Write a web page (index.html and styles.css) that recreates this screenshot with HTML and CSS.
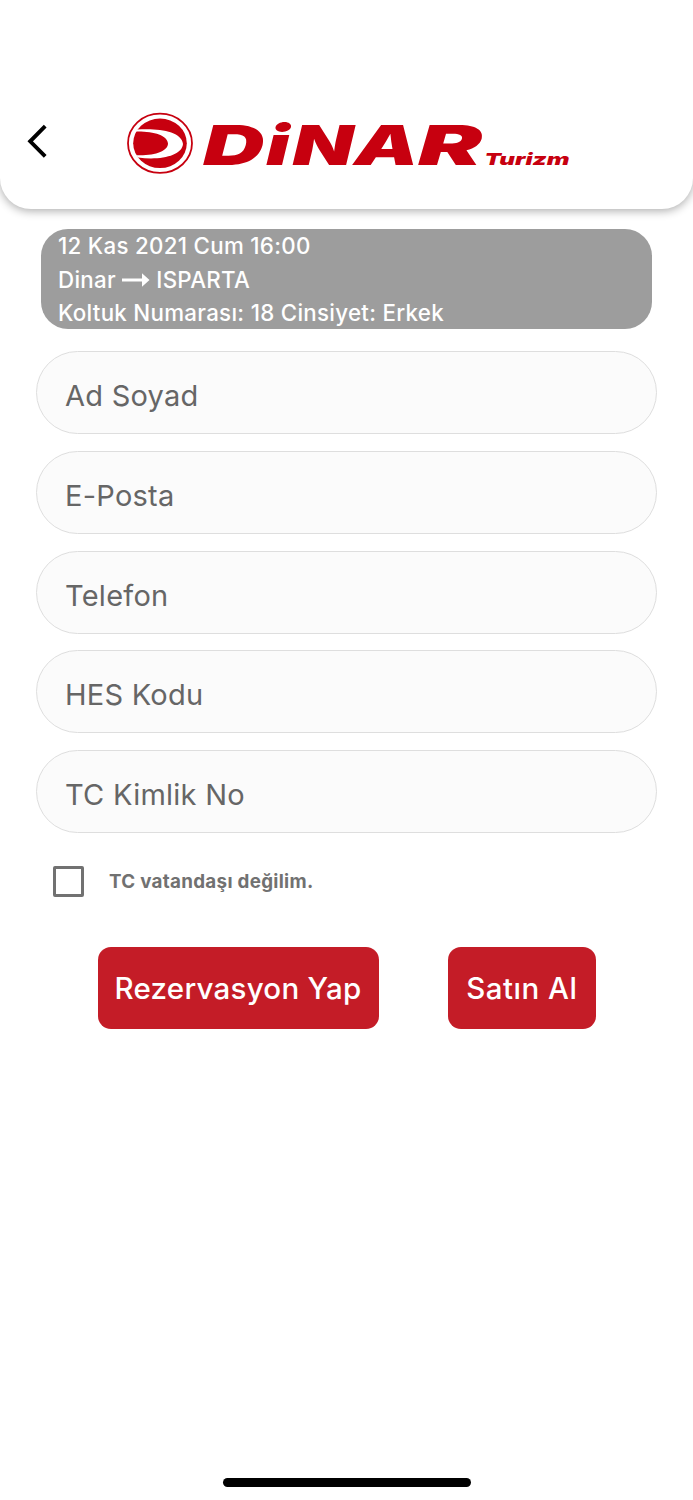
FILE: index.html
```html
<!DOCTYPE html>
<html lang="tr">
<head>
<meta charset="utf-8">
<title>Dinar Turizm</title>
<link rel="stylesheet" href="styles.css">
</head>
<body>
<div class="screen">
  <header class="header">
    <svg class="back" viewBox="0 0 22 34" width="22" height="34"><path d="M20.200 2.200 5.200 17.300l15 15" fill="none" stroke="#000" stroke-width="3.900"/></svg>
    <svg class="logo" viewBox="126 110 446 66" width="446" height="66">
      <ellipse cx="160" cy="143.3" rx="32" ry="29.6" fill="#fff" stroke="#c7000f" stroke-width="1.8"/>
      <ellipse cx="160" cy="143.3" rx="26.8" ry="24.8" fill="#c7000f"/>
      <path d="M137 129.500C158 128 182 131 183 144C182 156 160 160.500 138 157.500L136 155.200C155 156 168 151 168 143.500C167.500 135 153 131 135 131.500Z" fill="#fff"/>
      <g class="wordmark">
        <text transform="translate(203 165) scale(1.540 1)">D</text>
        <text transform="translate(266 165) scale(1.450 1)">i</text>
        <text transform="translate(292.500 165) scale(1.440 1)">N</text>
        <text transform="translate(354 165) scale(1.480 1)">A</text>
        <text transform="translate(418 165) scale(1.740 1)">R</text>
      </g>
      <text class="submark" x="484.500" y="165.300" textLength="85" lengthAdjust="spacingAndGlyphs">Turizm</text>
    </svg>
  </header>
  <main class="content">
    <section class="trip">
      <p class="date">12 Kas 2021 Cum 16:00</p>
      <p class="route"><span>Dinar</span><svg viewBox="0 0 28 16" width="28" height="16"><path d="M0 6.500h20V1.300L27.500 8 20 14.700V9.500H0z" fill="#fff"/></svg><span>ISPARTA</span></p>
      <p class="seat">Koltuk Numarası: 18 Cinsiyet: Erkek</p>
    </section>
    <form class="form">
      <input class="field" type="text" placeholder="Ad Soyad">
      <input class="field" type="text" placeholder="E-Posta">
      <input class="field" type="text" placeholder="Telefon">
      <input class="field" type="text" placeholder="HES Kodu">
      <input class="field" type="text" placeholder="TC Kimlik No">
      <label class="citizen"><span class="box"></span><span>TC vatandaşı değilim.</span></label>
      <div class="actions">
        <button class="button reserve" type="button">Rezervasyon Yap</button>
        <button class="button buy" type="button">Satın Al</button>
      </div>
    </form>
  </main>
  <div class="home"></div>
</div>
</body>
</html>
```
FILE: styles.css
```css
* { box-sizing: border-box; }
body { margin: 0; background: #fff; font-family: Inter, "Liberation Sans", sans-serif; }
.screen { height: 1500px; display: flex; flex-direction: column; overflow: hidden; }
.header {
  height: 209px;
  flex: none;
  padding: 110px 0 0 25px;
  display: flex;
  align-items: flex-start;
  background: #fff;
  border-radius: 0 0 31px 31px;
  box-shadow: 0 2px 10px rgba(0, 0, 0, .33);
}
.back { margin-top: 14px; }
.logo { margin-left: 79px; overflow: visible; }
.wordmark { font: italic 900 55px Inter, sans-serif; fill: #c7000f; }
.submark { font: italic 900 16.500px Inter, sans-serif; fill: #c7000f; }
.content { padding: 20px 36px 0; flex: 1; }
.trip {
  height: 100px;
  margin: 0 5px;
  padding: .4px 0 0 17px;
  border-radius: 27px;
  background: #9d9d9d;
  color: #fff;
  font-size: 22.300px;
  font-weight: 500;
  line-height: 33.400px;
  letter-spacing: .3px;
  white-space: nowrap;
}
.trip p { margin: 0; }
.route { display: flex; align-items: center; gap: 6.200px; }
.form { margin-top: 22px; display: flex; flex-direction: column; gap: 16.800px; }
.field {
  width: 621px;
  height: 83px;
  padding: 6px 28px 0;
  border: 1.500px solid #dedede;
  border-radius: 42px;
  background: #fbfbfb;
  font: 400 29px Inter, sans-serif;
  letter-spacing: .25px;
}
.field::placeholder { color: #666; opacity: 1; }
.citizen {
  margin: 16.500px 0 0 17px;
  height: 30px;
  display: flex;
  align-items: center;
  gap: 25px;
  color: #717171;
  font-size: 18.800px;
  font-weight: 700;
  letter-spacing: .3px;
}
.box { width: 31px; height: 31px; border: 3px solid #717171; border-radius: 2px; }
.actions { margin: 33.500px 0 0 61.500px; display: flex; gap: 69.500px; }
.button {
  height: 82px;
  padding: 0;
  border: 0;
  border-radius: 13px;
  background: #c41c27;
  color: #fff;
  font: 500 29.500px Inter, sans-serif;
  letter-spacing: .5px;
}
.reserve { width: 281px; letter-spacing: .25px; }
.buy { width: 147.500px; }
.home { width: 248px; height: 9px; margin: 0 auto 13px; border-radius: 5px; background: #000; }
```
